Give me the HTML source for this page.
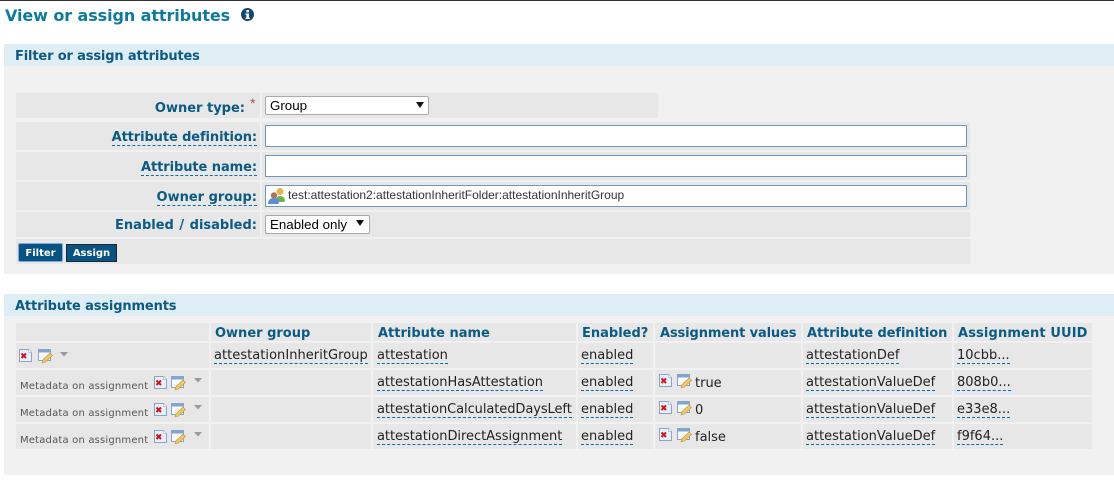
<!DOCTYPE html>
<html><head><meta charset="utf-8"><style>
html,body{margin:0;padding:0;background:#fff;width:1114px;height:489px;overflow:hidden}
.a{position:absolute;white-space:nowrap}
.v{font-family:"DejaVu Sans","Liberation Sans",sans-serif}
.c{position:absolute;background:#e7e7e7}
.p{position:absolute;background:#f1f1f1;left:4px;width:1110px}
.h{position:absolute;background:#dfeef4;left:4px;width:1110px;height:22px}
.ht{position:absolute;left:15px;font:bold 13px "DejaVu Sans",sans-serif;color:#0b5a84;white-space:nowrap;line-height:16px}
.l{position:absolute;right:857px;font:bold 13px "DejaVu Sans",sans-serif;color:#0b5a84;white-space:nowrap;line-height:16px}
.u{border-bottom:1px dashed #0a6fa8}
.i{position:absolute;left:265px;width:700px;height:20px;background:#fff;border:1px solid #6f97bd;outline:0}
.s{position:absolute;left:265px;background:#fff;border:1px solid #a9a9a9;border-radius:2px;box-sizing:border-box;font:13.333px/17px "Liberation Sans",sans-serif;color:#000;padding-left:4px}
.th{position:absolute;font:bold 13px/16px "DejaVu Sans",sans-serif;color:#0b5a84;white-space:nowrap}
.td{position:absolute;font:13px/15px "DejaVu Sans",sans-serif;color:#222;white-space:nowrap}
.m{position:absolute;left:20px;font:10px/12px "DejaVu Sans",sans-serif;color:#555;white-space:nowrap;letter-spacing:.18px}
svg{position:absolute;overflow:visible}
</style></head><body>
<svg width="0" height="0"><defs>
<g id="x"><path d="M.5.5h9l3 3v9h-12z" fill="#e6f0fa" stroke="#8aa6c4"/><path d="M9.500.5v3h3" fill="#fff" stroke="#a9bcd2" stroke-width=".7"/><path d="M2.500 4.500l4.500 4.500M7 4.500l-4.500 4.500" stroke="#d8121c" stroke-width="2"/></g>
<g id="e"><rect x=".5" y=".5" width="12" height="11" fill="#f8fbff" stroke="#8aa6c4"/><rect x="1" y="1" width="11" height="2.500" fill="#7fa5d6"/><path d="M4 14l1-3.500 7-6.500 2.500 2.500-7 6.500z" fill="#efc763" stroke="#c1973c" stroke-width=".6"/></g>
<g id="t"><path d="M0 0h8L4 4.500z" fill="#9a9a9a"/></g>
</defs></svg>
<div class="a" style="left:0;top:0;width:1114px;height:1px;background:#333"></div>
<div class="a v" style="left:5px;top:6px;font-weight:bold;font-size:16px;line-height:20px;color:#0e7a9e;letter-spacing:-.09px">View or assign attributes</div>
<svg style="left:241px;top:8px" width="13" height="13"><circle cx="6.500" cy="6.500" r="6.500" fill="#14466e"/><rect x="5.300" y="2" width="2.600" height="2.400" fill="#fff"/><path d="M4.400 5.500h3.500v4.200h1v1.300H4.400V9.700h1V6.800h-1z" fill="#fff"/></svg>

<div class="p" style="top:44px;height:230px"></div>
<div class="h" style="top:44px"></div>
<div class="ht" style="top:49px;letter-spacing:-.15px">Filter or assign attributes</div>

<div class="c" style="left:16px;top:93px;width:244px;height:25px"></div>
<div class="c" style="left:262px;top:93px;width:396px;height:25px"></div>
<div class="c" style="left:16px;top:122px;width:244px;height:28px"></div>
<div class="c" style="left:262px;top:122px;width:708px;height:28px"></div>
<div class="c" style="left:16px;top:152px;width:244px;height:28px"></div>
<div class="c" style="left:262px;top:152px;width:708px;height:28px"></div>
<div class="c" style="left:16px;top:182px;width:244px;height:28px"></div>
<div class="c" style="left:262px;top:182px;width:708px;height:28px"></div>
<div class="c" style="left:16px;top:212px;width:244px;height:25px"></div>
<div class="c" style="left:262px;top:212px;width:708px;height:25px"></div>
<div class="c" style="left:16px;top:239px;width:954px;height:25px"></div>

<div class="l" style="top:101px;right:869px">Owner type:</div>
<div class="a" style="left:250px;top:96px;font:14px/14px 'Liberation Sans',sans-serif;color:#b5533c">*</div>
<div class="l" style="top:130px;letter-spacing:-.1px"><span class="u">Attribute definition:</span></div>
<div class="l" style="top:160px;letter-spacing:-.07px"><span class="u">Attribute name:</span></div>
<div class="l" style="top:190px"><span class="u">Owner group:</span></div>
<div class="l" style="top:218px;word-spacing:1px">Enabled / disabled:</div>

<div class="s" style="top:96px;width:164px;height:19px">Group</div>
<svg style="left:416px;top:102px" width="9" height="7"><path d="M0 0h8L4 6z" fill="#111"/></svg>
<div class="i" style="top:125px"></div>
<div class="i" style="top:155px"></div>
<div class="i" style="top:185px"></div>
<svg style="left:268px;top:187px" width="18" height="18"><circle cx="12" cy="4.500" r="3.500" fill="#e9b04a"/><path d="M8 15c0-4 1-6 4-6s5 2 5 5l-1 1z" fill="#6fb04f"/><circle cx="6" cy="8.500" r="3.200" fill="#a9745a"/><path d="M0 17c0-4 2-6 6-6s5 2 5 5l-1 1z" fill="#5a8fd8"/></svg>
<div class="a" style="left:288px;top:188px;font:12px/15px 'Liberation Sans',sans-serif;color:#333">test:attestation2:attestationInheritFolder:attestationInheritGroup</div>
<div class="s" style="top:215px;width:105px;height:19px">Enabled only</div>
<svg style="left:356px;top:220px" width="9" height="7"><path d="M0 0h8L4 6z" fill="#111"/></svg>
<div class="a v" style="left:19px;top:244px;width:43px;height:17px;background:#075384;box-shadow:0 0 0 1px #7fa8e0;border-radius:1px;color:#fff;font-weight:bold;font-size:10px;line-height:19px;text-align:center">Filter</div>
<div class="a v" style="left:66px;top:244px;width:49px;height:16px;background:#075384;border:1px solid #222;color:#fff;font-weight:bold;font-size:10px;line-height:18px;text-align:center">Assign</div>

<div class="p" style="top:294px;height:181px"></div>
<div class="h" style="top:294px"></div>
<div class="ht" style="top:299px;letter-spacing:-.14px">Attribute assignments</div>

<div class="c" style="left:16px;top:323px;width:193px;height:18px"></div>
<div class="c" style="left:211px;top:323px;width:160px;height:18px"></div>
<div class="c" style="left:373px;top:323px;width:203px;height:18px"></div>
<div class="c" style="left:578px;top:323px;width:75px;height:18px"></div>
<div class="c" style="left:655px;top:323px;width:146px;height:18px"></div>
<div class="c" style="left:803px;top:323px;width:149px;height:18px"></div>
<div class="c" style="left:954px;top:323px;width:138px;height:18px"></div>

<div class="c" style="left:16px;top:343px;width:193px;height:25px"></div>
<div class="c" style="left:211px;top:343px;width:160px;height:25px"></div>
<div class="c" style="left:373px;top:343px;width:203px;height:25px"></div>
<div class="c" style="left:578px;top:343px;width:75px;height:25px"></div>
<div class="c" style="left:655px;top:343px;width:146px;height:25px"></div>
<div class="c" style="left:803px;top:343px;width:149px;height:25px"></div>
<div class="c" style="left:954px;top:343px;width:138px;height:25px"></div>

<div class="c" style="left:16px;top:370px;width:193px;height:25px"></div>
<div class="c" style="left:211px;top:370px;width:160px;height:25px"></div>
<div class="c" style="left:373px;top:370px;width:203px;height:25px"></div>
<div class="c" style="left:578px;top:370px;width:75px;height:25px"></div>
<div class="c" style="left:655px;top:370px;width:146px;height:25px"></div>
<div class="c" style="left:803px;top:370px;width:149px;height:25px"></div>
<div class="c" style="left:954px;top:370px;width:138px;height:25px"></div>

<div class="c" style="left:16px;top:397px;width:193px;height:25px"></div>
<div class="c" style="left:211px;top:397px;width:160px;height:25px"></div>
<div class="c" style="left:373px;top:397px;width:203px;height:25px"></div>
<div class="c" style="left:578px;top:397px;width:75px;height:25px"></div>
<div class="c" style="left:655px;top:397px;width:146px;height:25px"></div>
<div class="c" style="left:803px;top:397px;width:149px;height:25px"></div>
<div class="c" style="left:954px;top:397px;width:138px;height:25px"></div>

<div class="c" style="left:16px;top:424px;width:193px;height:25px"></div>
<div class="c" style="left:211px;top:424px;width:160px;height:25px"></div>
<div class="c" style="left:373px;top:424px;width:203px;height:25px"></div>
<div class="c" style="left:578px;top:424px;width:75px;height:25px"></div>
<div class="c" style="left:655px;top:424px;width:146px;height:25px"></div>
<div class="c" style="left:803px;top:424px;width:149px;height:25px"></div>
<div class="c" style="left:954px;top:424px;width:138px;height:25px"></div>

<div class="th" style="left:215px;top:326px">Owner group</div>
<div class="th" style="left:378px;top:326px">Attribute name</div>
<div class="th" style="left:582px;top:326px">Enabled?</div>
<div class="th" style="left:660px;top:326px;letter-spacing:-.12px">Assignment values</div>
<div class="th" style="left:807px;top:326px;letter-spacing:-.1px">Attribute definition</div>
<div class="th" style="left:958px;top:326px;letter-spacing:.13px">Assignment UUID</div>

<svg style="left:19px;top:349px" width="13" height="13"><use href="#x"/></svg>
<svg style="left:38px;top:349px" width="15" height="14"><use href="#e"/></svg>
<svg style="left:60px;top:352px" width="8" height="5"><use href="#t"/></svg>
<div class="td" style="left:214px;top:348px;letter-spacing:.04px"><span class="u">attestationInheritGroup</span></div>
<div class="td" style="left:377px;top:348px"><span class="u">attestation</span></div>
<div class="td" style="left:581px;top:348px"><span class="u">enabled</span></div>
<div class="td" style="left:806px;top:348px"><span class="u">attestationDef</span></div>
<div class="td" style="left:957px;top:348px"><span class="u">10cbb...</span></div>

<div class="m" style="left:20px;top:381px">Metadata on assignment</div>
<svg style="left:154px;top:376px" width="13" height="13"><use href="#x"/></svg>
<svg style="left:171px;top:376px" width="15" height="14"><use href="#e"/></svg>
<svg style="left:194px;top:378px" width="8" height="5"><use href="#t"/></svg>
<div class="td" style="left:377px;top:375px;letter-spacing:-.04px"><span class="u">attestationHasAttestation</span></div>
<div class="td" style="left:581px;top:375px"><span class="u">enabled</span></div>
<svg style="left:659px;top:374px" width="13" height="13"><use href="#x"/></svg>
<svg style="left:677px;top:374px" width="15" height="14"><use href="#e"/></svg>
<div class="td" style="left:695px;top:376px">true</div>
<div class="td" style="left:806px;top:375px"><span class="u">attestationValueDef</span></div>
<div class="td" style="left:957px;top:375px"><span class="u">808b0...</span></div>

<div class="m" style="left:20px;top:408px">Metadata on assignment</div>
<svg style="left:154px;top:403px" width="13" height="13"><use href="#x"/></svg>
<svg style="left:171px;top:403px" width="15" height="14"><use href="#e"/></svg>
<svg style="left:194px;top:405px" width="8" height="5"><use href="#t"/></svg>
<div class="td" style="left:377px;top:402px;letter-spacing:-.07px"><span class="u">attestationCalculatedDaysLeft</span></div>
<div class="td" style="left:581px;top:402px"><span class="u">enabled</span></div>
<svg style="left:659px;top:401px" width="13" height="13"><use href="#x"/></svg>
<svg style="left:677px;top:401px" width="15" height="14"><use href="#e"/></svg>
<div class="td" style="left:695px;top:403px">0</div>
<div class="td" style="left:806px;top:402px"><span class="u">attestationValueDef</span></div>
<div class="td" style="left:957px;top:402px"><span class="u">e33e8...</span></div>

<div class="m" style="left:20px;top:435px">Metadata on assignment</div>
<svg style="left:154px;top:430px" width="13" height="13"><use href="#x"/></svg>
<svg style="left:171px;top:430px" width="15" height="14"><use href="#e"/></svg>
<svg style="left:194px;top:432px" width="8" height="5"><use href="#t"/></svg>
<div class="td" style="left:377px;top:429px;letter-spacing:-.04px"><span class="u">attestationDirectAssignment</span></div>
<div class="td" style="left:581px;top:429px"><span class="u">enabled</span></div>
<svg style="left:659px;top:428px" width="13" height="13"><use href="#x"/></svg>
<svg style="left:677px;top:428px" width="15" height="14"><use href="#e"/></svg>
<div class="td" style="left:695px;top:430px">false</div>
<div class="td" style="left:806px;top:429px"><span class="u">attestationValueDef</span></div>
<div class="td" style="left:957px;top:429px"><span class="u">f9f64...</span></div>
</body></html>
